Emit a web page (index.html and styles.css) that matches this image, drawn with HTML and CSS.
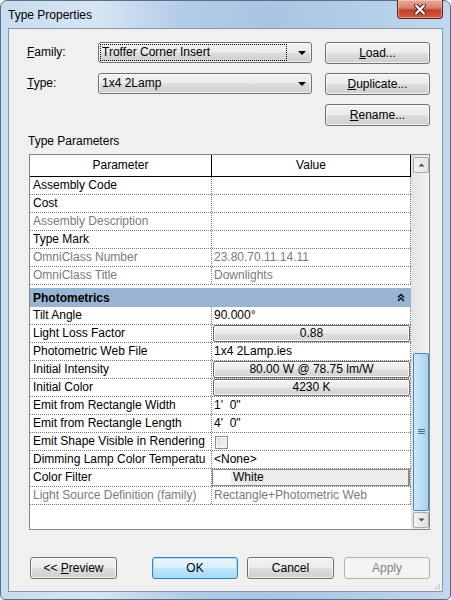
FILE: index.html
```html
<!DOCTYPE html>
<html lang="en">
<head>
    <meta charset="UTF-8">
    <title>Type Properties</title>
    <link rel="stylesheet" href="styles.css">
</head>
<body>
    <div class="window">
        <div class="titlebar">
            <span class="title">Type Properties</span>
            <div class="close">
                <svg width="14" height="11" viewBox="0 0 14 11">
                    <path d="M3 1.5 L11 9.5 M11 1.5 L3 9.5" stroke="#4a1a12" stroke-width="4" stroke-linecap="round"/>
                    <path d="M3 1.5 L11 9.5 M11 1.5 L3 9.5" stroke="#fff" stroke-width="2.2" stroke-linecap="round"/>
                </svg>
            </div>
        </div>

        <div class="client">
            <div class="top">
                <label class="lbl"><u>F</u>amily:</label>
                <div class="combo"><span class="focus">Troffer Corner Insert</span><i class="arrow"></i></div>
                <button class="btn"><u>L</u>oad...</button>

                <label class="lbl"><u>T</u>ype:</label>
                <div class="combo"><span class="plain">1x4 2Lamp</span><i class="arrow"></i></div>
                <button class="btn"><u>D</u>uplicate...</button>

                <span></span><span></span>
                <button class="btn"><u>R</u>ename...</button>
            </div>

            <div class="section">Type Parameters</div>

            <div class="table">
                <div class="tbody">
                    <div class="row head"><div>Parameter</div><div>Value</div></div>
                    <div class="row"><div>Assembly Code</div><div></div></div>
                    <div class="row"><div>Cost</div><div></div></div>
                    <div class="row ro"><div>Assembly Description</div><div></div></div>
                    <div class="row"><div>Type Mark</div><div></div></div>
                    <div class="row ro"><div>OmniClass Number</div><div>23.80.70.11.14.11</div></div>
                    <div class="row ro"><div>OmniClass Title</div><div>Downlights</div></div>

                    <div class="group">
                        <div class="band">
                            <span>Photometrics</span>
                            <svg width="8" height="9" viewBox="0 0 8 9">
                                <path d="M1 4.5 L4 1.5 L7 4.5 M1 8 L4 5 L7 8" fill="none" stroke="#000" stroke-width="1.4"/>
                            </svg>
                        </div>
                    </div>

                    <div class="row"><div>Tilt Angle</div><div>90.000°</div></div>
                    <div class="row"><div>Light Loss Factor</div><div class="cellbtn"><span class="vbtn">0.88</span></div></div>
                    <div class="row"><div>Photometric Web File</div><div>1x4 2Lamp.ies</div></div>
                    <div class="row"><div>Initial Intensity</div><div class="cellbtn"><span class="vbtn">80.00 W @ 78.75 lm/W</span></div></div>
                    <div class="row"><div>Initial Color</div><div class="cellbtn"><span class="vbtn">4230 K</span></div></div>
                    <div class="row"><div>Emit from Rectangle Width</div><div>1'&nbsp; 0"</div></div>
                    <div class="row"><div>Emit from Rectangle Length</div><div>4'&nbsp; 0"</div></div>
                    <div class="row"><div>Emit Shape Visible in Rendering</div><div class="cellcheck"><span class="check"></span></div></div>
                    <div class="row"><div>Dimming Lamp Color Temperatu</div><div>&lt;None&gt;</div></div>
                    <div class="row"><div>Color Filter</div><div class="cellcolor"><span class="colorbtn"><i class="swatch"></i>White</span></div></div>
                    <div class="row ro"><div>Light Source Definition (family)</div><div>Rectangle+Photometric Web</div></div>
                </div>

                <div class="scrollbar">
                    <div class="sbtn"><svg width="7" height="4" viewBox="0 0 7 4"><path d="M0.5 3.5 L3.5 0.5 L6.5 3.5 Z" fill="#4d4d4d"/></svg></div>
                    <div class="track">
                        <div class="thumb">
                            <svg width="7" height="6" viewBox="0 0 7 6"><path d="M0 0.5 H7 M0 2.5 H7 M0 4.5 H7" stroke="#3d6f98" stroke-width="1"/></svg>
                        </div>
                    </div>
                    <div class="sbtn"><svg width="7" height="4" viewBox="0 0 7 4"><path d="M0.5 0.5 L3.5 3.5 L6.5 0.5 Z" fill="#4d4d4d"/></svg></div>
                </div>
            </div>

            <div class="footer">
                <button class="btn preview">&lt;&lt; <u>P</u>review</button>
                <button class="btn ok">OK</button>
                <button class="btn cancel">Cancel</button>
                <button class="btn apply" disabled>Apply</button>
            </div>

            <svg class="grip" width="7" height="7" viewBox="0 0 7 7">
                <rect x="5" y="1" width="1" height="1" fill="#a0a0a0"/>
                <rect x="3" y="3" width="1" height="1" fill="#a0a0a0"/>
                <rect x="5" y="3" width="1" height="1" fill="#a0a0a0"/>
                <rect x="1" y="5" width="1" height="1" fill="#a0a0a0"/>
                <rect x="3" y="5" width="1" height="1" fill="#a0a0a0"/>
                <rect x="5" y="5" width="1" height="1" fill="#a0a0a0"/>
            </svg>
        </div>
    </div>
</body>
</html>
```

FILE: styles.css
```css
* {
    box-sizing: border-box;
}
body {
    margin: 0;
    background: #fff;
    font-family: "Liberation Sans", Arial, sans-serif;
    font-size: 12px;
    color: #000;
}
.window {
    width: 451px;
    height: 600px;
    border: 1px solid #5f6f83;
    border-radius: 7px 7px 5px 5px;
    padding: 0 7px 7px;
    display: flex;
    flex-direction: column;
    background: linear-gradient(90deg, #c9dcf0 0%, #d6e5f4 22%, #b3cce7 40%, #a9c5e3 60%, #b6cfe9 85%, #c3d7ee 100%);
}
.titlebar {
    height: 27px;
    display: flex;
    align-items: flex-start;
}
.title {
    margin-top: 7px;
    font-size: 12px;
}
.close {
    margin-left: auto;
    margin-top: -1px;
    width: 46px;
    height: 19px;
    border: 1px solid #5b2219;
    border-top: none;
    border-radius: 0 0 4px 4px;
    background: linear-gradient(#e9a99b 0%, #d97f6e 45%, #c3402c 55%, #cf5b3e 100%);
    box-shadow: inset 0 0 0 1px rgba(255, 220, 210, 0.5);
    display: flex;
    align-items: center;
    justify-content: center;
}
.client {
    flex: 1;
    position: relative;
    background: #f0f0f0;
    border: 1px solid #8397ae;
    padding-top: 13px;
    display: flex;
    flex-direction: column;
}
.top {
    display: grid;
    grid-template-columns: 58px 214px 105px;
    grid-template-rows: 31px 31px 22px;
    column-gap: 13px;
    margin-left: 18px;
}
.lbl {
    line-height: 20px;
}
.btn {
    height: 22px;
    padding: 0;
    border: 1px solid #707070;
    border-radius: 3px;
    background: linear-gradient(#f2f2f2 0%, #ebebeb 48%, #dddddd 52%, #cfcfcf 100%);
    box-shadow: inset 0 0 0 1px rgba(255, 255, 255, 0.7);
    font: inherit;
    color: #000;
}
.combo {
    height: 21px;
    border: 1px solid #707070;
    border-radius: 3px;
    background: linear-gradient(#f2f2f2 0%, #ebebeb 48%, #dddddd 52%, #cfcfcf 100%);
    box-shadow: inset 0 0 0 1px rgba(255, 255, 255, 0.7);
    display: flex;
    align-items: center;
    padding: 0 5px 0 2px;
}
.focus, .plain {
    flex: 1;
    height: 15px;
    line-height: 14px;
    padding-left: 1px;
    margin-right: 12px;
}
.focus {
    outline: 1px dotted #000;
}
.arrow {
    width: 0;
    height: 0;
    border-left: 4px solid transparent;
    border-right: 4px solid transparent;
    border-top: 4px solid #000;
}
.section {
    margin: 8px 0 0 19px;
    height: 14px;
    line-height: 14px;
}
.table {
    margin: 6px 0 0 20px;
    width: 401px;
    height: 376px;
    border: 1px solid #828790;
    background: #fff;
    display: flex;
}
.tbody {
    width: 381px;
}
.row {
    display: grid;
    grid-template-columns: 182px 199px;
    height: 18px;
    border-bottom: 1px dotted #7a7a7a;
}
.row > div {
    line-height: 17px;
    padding-left: 3px;
    white-space: nowrap;
    overflow: hidden;
    border-right: 1px dotted #7a7a7a;
}
.row > div + div {
    padding-left: 2px;
}
.ro {
    color: #7b7b7b;
}
.row.head {
    height: 22px;
    border-bottom: 1px solid #000;
}
.row.head > div {
    line-height: 21px;
    text-align: center;
    padding: 0;
    border-right: 1px solid #000;
}
.group {
    height: 22px;
    padding-top: 3px;
}
.band {
    height: 19px;
    background: #99b4d2;
    display: flex;
    align-items: center;
    justify-content: space-between;
    padding: 0 6px 0 3px;
    font-weight: bold;
}
.row > .cellbtn,
.row > .cellcolor,
.row > .cellcheck {
    padding: 0;
}
.vbtn {
    display: block;
    margin-left: 1px;
    height: 17px;
    line-height: 15px;
    text-align: center;
    border: 1px solid #6e6e6e;
    border-radius: 2px;
    background: linear-gradient(#f3f3f3 0%, #ebebeb 48%, #dedede 52%, #d2d2d2 100%);
    box-shadow: inset 0 0 0 1px #fafafa;
}
.colorbtn {
    display: flex;
    height: 17px;
    line-height: 15px;
    border: 1px solid #8a8a8a;
    border-right-width: 2px;
    background: #ececec;
}
.swatch {
    width: 18px;
    background: #fff;
    margin-right: 2px;
}
.check {
    display: block;
    width: 13px;
    height: 13px;
    margin: 3px 0 0 3px;
    border: 1px solid #8e8f8f;
    background: linear-gradient(135deg, #dcdcdc, #f6f6f6);
    box-shadow: inset 0 0 0 1px #f4f4f4;
}
.scrollbar {
    width: 18px;
    padding: 2px 0 1px 2px;
    display: flex;
    flex-direction: column;
    background: linear-gradient(90deg, #e3e3e3, #f2f2f2);
}
.sbtn {
    height: 16px;
    border: 1px solid #a9a9a9;
    border-radius: 2px;
    background: linear-gradient(90deg, #f3f3f3, #e2e2e2);
    display: flex;
    align-items: center;
    justify-content: center;
}
.track {
    flex: 1;
    padding: 180px 0 1px;
    display: flex;
}
.thumb {
    flex: 1;
    border: 1px solid #4f86b4;
    border-radius: 2px;
    background: linear-gradient(90deg, #cfe8f8, #b7dcf4 60%, #a9d2ef);
    display: flex;
    align-items: center;
    justify-content: center;
}
.footer {
    display: flex;
    margin: 27px 0 0 21px;
}
.footer .btn {
    width: 87px;
}
.preview {
    margin-right: 35px;
}
.ok {
    border-color: #3c7fb1;
    background: linear-gradient(#eaf6fd 0%, #d9f0fc 48%, #bee6fd 52%, #a7d9f5 100%);
    box-shadow: inset 0 0 0 1px #9ee3fb;
}
.footer .ok, .footer .apply {
    width: 86px;
}
.cancel {
    margin: 0 10px 0 9px;
}
.apply {
    border-color: #adb2b5;
    background: #f4f4f4;
    box-shadow: none;
    color: #838383;
}
.grip {
    position: absolute;
    right: 1px;
    bottom: 1px;
}
```
